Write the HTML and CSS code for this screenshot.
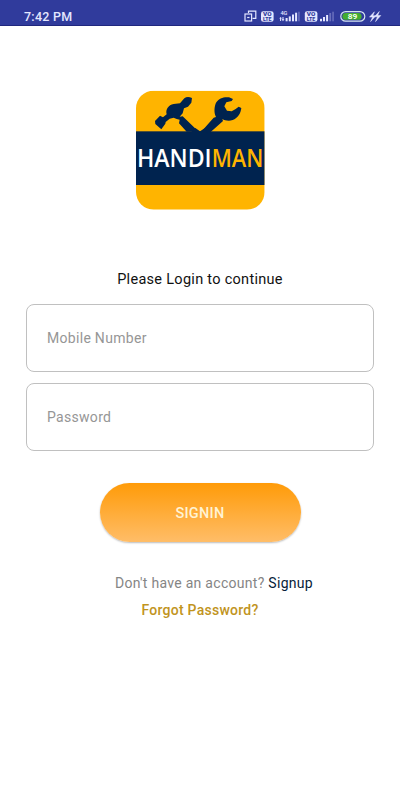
FILE: index.html
```html
<!DOCTYPE html>
<html lang="en">
<head>
<meta charset="utf-8">
<title>Handiman</title>
<link rel="stylesheet" href="styles.css">
</head>
<body>
<header class="status">
  <span class="time">7:42 PM</span>
  <svg class="status-icons" viewBox="240 5 145 20" role="img" aria-label="Device status">
    <g fill="none" stroke="#e4e7ff" stroke-width="1.2">
      <path d="M248.5 13v-1.8h7.3v7.2h-3.3"/>
      <rect x="245" y="14" width="6.6" height="7"/>
      <path d="M247.2 17.5h2.3" />
    </g>
    <g fill="#e4e7ff">
      <rect x="261" y="11.3" width="12.6" height="10.4" rx="2.3"/>
      <rect x="304.8" y="11.3" width="12.6" height="10.4" rx="2.3"/>
      <rect x="285.6" y="18" width="2" height="3.3"/>
      <rect x="288.8" y="16.4" width="2" height="4.9"/>
      <rect x="292" y="14.5" width="2" height="6.8"/>
      <rect x="295.1" y="12.7" width="2" height="8.6"/>
      <rect x="320" y="18.8" width="2" height="2.5"/>
      <rect x="323" y="17" width="2" height="4.3"/>
      <rect x="326.1" y="15" width="2" height="6.3"/>
      <path d="M279.2 18.5l1.4-1.6 1.4 1.6zM281.6 19.3h2.8l-1.4 1.9zM280.1 18h1v3h-1zM282.5 17h1v3h-1z"/>
      <path d="M374.4 11.8l-4.9 5.3h3.1l-2 4.5 5.3-5.9h-3.1zM379.3 11.5l-4.9 5.3h3.1l-2 4.8 5.3-6.1h-3.1z" stroke="#e4e7ff" stroke-width=".5"/>
    </g>
    <g fill="#6970bd">
      <rect x="298.2" y="11.7" width="1.5" height="9.6"/>
      <rect x="329.3" y="13" width="1.8" height="8.3"/>
      <rect x="332.3" y="11.7" width="1.5" height="9.6"/>
    </g>
    <g class="tiny" fill="#303b9c">
      <text x="263" y="16.2" textLength="8.5" lengthAdjust="spacingAndGlyphs">VO</text>
      <text x="263" y="20.8" textLength="8.5" lengthAdjust="spacingAndGlyphs">LTE</text>
      <text x="306.8" y="16.2" textLength="8.5" lengthAdjust="spacingAndGlyphs">VO</text>
      <text x="306.8" y="20.8" textLength="8.5" lengthAdjust="spacingAndGlyphs">LTE</text>
    </g>
    <text class="net" x="280.4" y="15.2" textLength="7" lengthAdjust="spacingAndGlyphs">4G</text>
    <rect x="340.8" y="11.6" width="24" height="9.6" rx="4.8" fill="#303b9c" stroke="#d5e5ef" stroke-width="1.2"/>
    <rect x="342.4" y="13" width="19.2" height="6.8" rx="3.4" fill="#43ad30"/>
    <text class="charge" x="347.7" y="19.2" textLength="9.6" lengthAdjust="spacingAndGlyphs">89</text>
  </svg>
</header>
<main class="login">
  <svg class="logo" viewBox="15 18 390 360" role="img" aria-label="Handiman">
    <defs><clipPath id="badge"><rect x="18" y="20" width="386" height="357" rx="53"/></clipPath></defs>
    <g clip-path="url(#badge)">
      <rect x="18" y="20" width="386" height="357" fill="#ffb400"/>
      <rect x="18" y="142" width="386" height="161" fill="#00234f"/>
    </g>
    <g fill="#00234f">
      <path d="M75 111L90 95L99 100L110 91C106 76 115 63 131 60L150 58L163 43Q172 36 186 42L184 56L174 68L162 73L158 88L149 98L158 97L206 143H170L147 118L149 107L140 105L131 101L119 104L107 114L106 119L94 136L76 120Z"/>
      <path d="M258 99C251 85 253 68 258 56C267 42 282 38 297 40L309 45L305 51L289 55L283 67L291 80L305 82L317 75L326 68L334 72C332 89 324 102 308 108C296 113 284 109 277 105L279 111L242 144H213L251 101Z"/>
      <path d="M196 132L210 142L224 133L233 150H178Z"/>
    </g>
    <text class="brand" x="21" y="249" textLength="224" lengthAdjust="spacingAndGlyphs" fill="#fff">HANDI</text>
    <text class="brand" x="245" y="249" textLength="155" lengthAdjust="spacingAndGlyphs" fill="#ffb400">MAN</text>
  </svg>
  <p class="prompt">Please Login to continue</p>
  <form class="form">
    <input class="field" type="tel" placeholder="Mobile Number" aria-label="Mobile Number">
    <input class="field" type="password" placeholder="Password" aria-label="Password">
    <button class="signin" type="button">SIGNIN</button>
  </form>
  <p class="account">Don't have an account? <a class="signup">Signup</a></p>
  <a class="forgot">Forgot Password?</a>
</main>
</body>
</html>
```
FILE: styles.css
```css
* { box-sizing: border-box; }
body { margin: 0; height: 800px; background: #fff; font-family: Roboto, sans-serif; overflow: hidden; }
.status { height: 26px; padding: 5px 15px 0 24px; display: flex; justify-content: space-between; background: #303b9c; border-bottom: 1px solid #20277e; }
.time { color: #e4e7ff; font-size: 12.5px; line-height: 23px; font-weight: 500; letter-spacing: .25px; white-space: nowrap; }
.status-icons { width: 145px; height: 20px; }
.tiny { font: 900 4.8px Roboto, sans-serif; }
.net { font: 500 6px Roboto, sans-serif; fill: #e4e7ff; }
.charge { font: 700 7.8px Roboto, sans-serif; fill: #f2ffee; }
.login { display: flex; flex-direction: column; align-items: center; padding: 64px 25px 0; }
.logo { width: 130px; height: 120px; }
.brand { font: 600 75px "Open Sans", sans-serif; }
.prompt { margin: 60px 0 0; font-size: 14.5px; line-height: 20px; letter-spacing: .29px; color: #111; white-space: nowrap; }
.form { width: 348px; margin-top: 14px; display: flex; flex-direction: column; align-items: center; gap: 11px; }
.field { width: 348px; height: 68px; border: 1.5px solid #c0c0c0; border-radius: 8px; padding: 0 20px; background: #fff; font: 14px Roboto, sans-serif; letter-spacing: .3px; color: #222; outline: 0; }
.field::placeholder { color: #969696; opacity: 1; }
.signin { width: 201px; height: 59px; margin-top: 21px; padding: 1px 0 0; border: 0; border-radius: 30px; background: linear-gradient(#ff9b08, #ffbd68); box-shadow: 0 1px 2px #0004; color: #fff3d3; font: 500 14.5px Roboto, sans-serif; letter-spacing: .3px; }
.account { margin: 31px 0 0; padding-left: 28px; font-size: 14px; line-height: 20px; letter-spacing: .29px; color: #858585; white-space: nowrap; }
.signup { color: #071d38; }
.forgot { margin-top: 7px; font-size: 14px; line-height: 20px; font-weight: 500; letter-spacing: .25px; color: #c1941d; }
```
